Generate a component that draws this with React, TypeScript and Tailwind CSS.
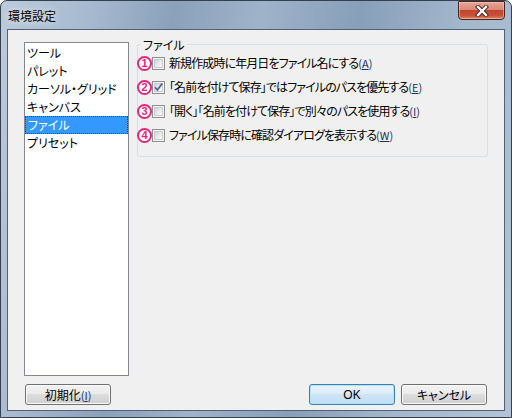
import React from "react";

const jp = "font-['Noto_Sans_CJK_JP','Noto_Sans',sans-serif] [font-feature-settings:'palt']";

function Circled({ n }: { n: string }) {
  return (
    <span className="-ml-[1px] flex h-[15px] w-[15px] shrink-0 items-center justify-center rounded-full border-[2px] border-[#e8247c] bg-white text-[11px] font-bold leading-none text-[#e8247c] font-['Liberation_Sans',sans-serif]">
      {n}
    </span>
  );
}

function Checkbox({ checked }: { checked?: boolean }) {
  return (
    <span className="flex h-[13px] w-[13px] shrink-0 items-center justify-center border border-[#8e8f8f] bg-[#f4f4f4]">
      <span className="flex h-[9px] w-[9px] items-center justify-center border border-[#c7cbd0] bg-[linear-gradient(135deg,#cfd3d8_0%,#eceeef_60%,#f8f8f8_100%)]">
        {checked && (
          <svg width="9" height="9" viewBox="0 0 9 9" className="overflow-visible">
            <path d="M1 4.2 L3.4 7 L8.2 0.6" fill="none" stroke="#4a5f97" strokeWidth="1.7" />
          </svg>
        )}
      </span>
    </span>
  );
}

function Row({ n, text, mn, checked }: { n: string; text: string; mn: string; checked?: boolean }) {
  return (
    <div className="flex h-[24px] items-center">
      <Circled n={n} />
      <Checkbox checked={checked} />
      <span className="ml-[4px] whitespace-nowrap text-[12px] leading-none tracking-[-0.9px] text-black">
        {text}
        <span className="text-[#1d2f5c] text-[11px] tracking-[0px]">
          (<span className="underline underline-offset-[1px]">{mn}</span>)
        </span>
      </span>
    </div>
  );
}

function Btn({ children, def }: { children: React.ReactNode; def?: boolean }) {
  return (
    <div
      className={
        "flex h-[21px] w-[86px] items-center justify-center rounded-[3px] border text-[12px] leading-none text-black " +
        (def
          ? "border-[#3c7fb1] bg-[linear-gradient(#e9f4fc_0%,#dbecfa_50%,#cde4f7_50%,#c3ddf5_100%)] shadow-[inset_0_0_0_1px_#aee3f8]"
          : "border-[#707070] bg-[linear-gradient(#f2f2f2_0%,#ebebeb_50%,#dddddd_50%,#cfcfcf_100%)] shadow-[inset_0_0_0_1px_#fbfbfb]")
      }
    >
      {children}
    </div>
  );
}

export default function App() {
  const items = ["ツール", "パレット", "カーソル・グリッド", "キャンバス", "ファイル", "プリセット"];
  return (
    <div className={"w-[512px] h-[418px] " + jp}>
      <div className="flex h-full w-full flex-col rounded-t-[7px] border border-[#33404f] bg-[linear-gradient(100deg,#bccbdb_0%,#a8bad0_15%,#8ba1ba_30%,#9fb3c9_45%,#889fb9_62%,#a4b7cc_80%,#b3c3d5_100%)] px-[6px] pb-[6px]">
        <div className="flex h-[28px] items-start justify-between">
          <span className="ml-[1px] mt-[8px] text-[12px] leading-[14px] text-black [text-shadow:0_0_6px_rgba(255,255,255,0.9)]">
            環境設定
          </span>
          <div className="flex h-[19px] w-[47px] items-center justify-center rounded-b-[4px] rounded-t-[1px] border border-[#4a2218] bg-[linear-gradient(#e8a595_0%,#d98a77_45%,#c3452c_50%,#c8513a_80%,#df8a6a_100%)] shadow-[inset_0_0_0_1px_rgba(255,210,200,0.5)]">
            <svg width="14" height="12" viewBox="0 0 14 12">
              <path d="M3 2 L11 10 M11 2 L3 10" stroke="#3a2a2a" strokeWidth="4.2" strokeLinecap="square" />
              <path d="M3 2 L11 10 M11 2 L3 10" stroke="#ffffff" strokeWidth="2.3" strokeLinecap="square" />
            </svg>
          </div>
        </div>
        <div className="flex flex-1 flex-col border border-[#4f6277] bg-[#f0f0f0] px-[16px] pb-[5px]">
          <div className="flex flex-1 items-start gap-[8px]">
            <div className="mt-[12px] flex h-[334px] w-[105px] shrink-0 flex-col border border-[#828790] bg-white pt-[1px]">
              {items.map((it) => {
                const sel = it === "ファイル";
                return (
                  <div
                    key={it}
                    className={
                      "flex h-[18px] items-center whitespace-nowrap px-[2px] text-[12px] leading-none " +
                      (sel ? "border border-dotted border-[#5a3a10] bg-[#3399ff] px-[1px] text-white" : "text-black")
                    }
                  >
                    {it}
                  </div>
                );
              })}
            </div>
            <fieldset className="mt-[8px] flex-1 rounded-[3px] border border-[#d5dfe5] pb-[9px]">
              <legend className="ml-[3px] px-[2px] text-[12px] leading-[13px] text-black">ファイル</legend>
              <Row n="1" text="新規作成時に年月日をファイル名にする" mn="A" />
              <Row n="2" text="「名前を付けて保存」ではファイルのパスを優先する" mn="E" checked />
              <Row n="3" text="「開く」「名前を付けて保存」で別々のパスを使用する" mn="I" />
              <Row n="4" text="ファイル保存時に確認ダイアログを表示する" mn="W" />
            </fieldset>
          </div>
          <div className="mt-[7px] flex items-center justify-between pl-[1px] pr-[1px]">
            <Btn>
              <span>
                初期化<span className="text-[#1d2f5c] text-[11px]">(<span className="underline">I</span>)</span>
              </span>
            </Btn>
            <div className="flex gap-[6px]">
              <Btn def>
                <span className="font-['Liberation_Sans',sans-serif] text-[12px]">OK</span>
              </Btn>
              <Btn>
                <span>キャンセル</span>
              </Btn>
            </div>
          </div>
        </div>
      </div>
    </div>
  );
}
